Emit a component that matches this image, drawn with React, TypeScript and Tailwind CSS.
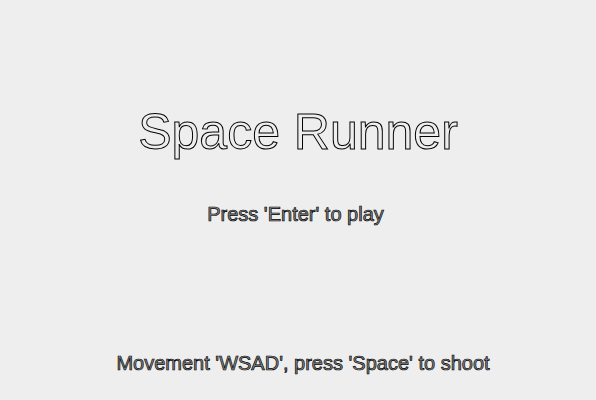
export default function App() {
  return (
    <div
      className="flex h-[400px] w-full flex-col items-center bg-[#eeeeee] pt-[107px]"
      style={{ fontFamily: '"Liberation Sans", Arial, sans-serif' }}
    >
      {/* Titre */}
      <h1 className="text-[50px] leading-[50px] text-[#eeeeee] [-webkit-text-stroke:1px_#000]">
        Space Runner
      </h1>

      <p className="mt-[47px] ml-[-5px] text-[20px] leading-[20px] text-[#8c8c8c] [-webkit-text-stroke:0.7px_#000]">
        Press 'Enter' to play
      </p>

      <p className="mt-[129px] ml-[10px] text-[20px] leading-[20px] text-[#8c8c8c] [-webkit-text-stroke:0.7px_#000]">
        Movement 'WSAD', press 'Space' to shoot
      </p>
    </div>
  );
}
